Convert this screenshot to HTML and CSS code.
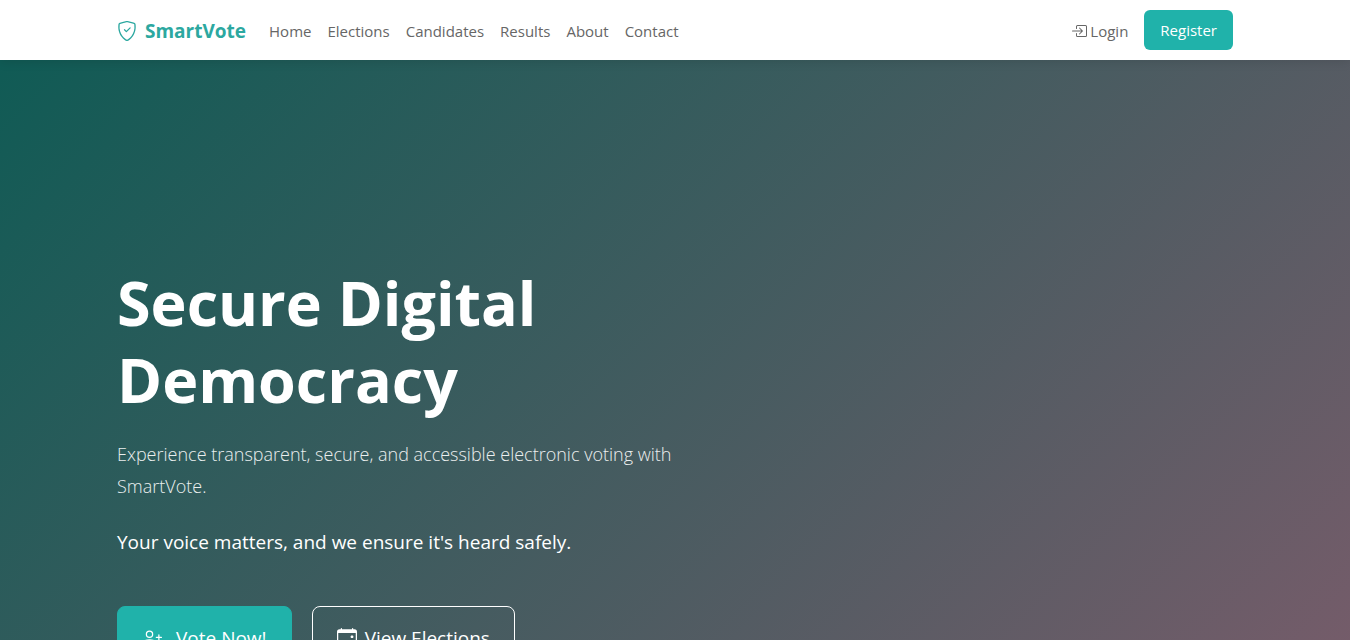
FILE: index.html
```html
<!DOCTYPE html>
<html lang="en">
  <head>
    <meta charset="UTF-8" />
    <meta name="viewport" content="width=device-width, initial-scale=1.0" />
    <title>SmartVote</title>
    <link rel="stylesheet" href="styles.css">
  </head>
  <body>
    <nav class="navbar">
      <div class="container navbar-inner">
        <a class="brand" href="#">
          <svg class="brand-icon" viewBox="0 0 16 16" fill="currentColor" aria-hidden="true">
            <path d="M5.338 1.59a61 61 0 0 0-2.837.856.48.48 0 0 0-.328.39c-.554 4.157.726 7.19 2.253 9.188a10.7 10.7 0 0 0 2.287 2.233c.346.244.652.42.893.533q.18.085.293.118a1 1 0 0 0 .101.025 1 1 0 0 0 .1-.025q.114-.034.294-.118c.24-.113.547-.29.893-.533a10.7 10.7 0 0 0 2.287-2.233c1.527-1.997 2.807-5.031 2.253-9.188a.48.48 0 0 0-.328-.39c-.651-.213-1.75-.56-2.837-.855C9.552 1.29 8.531 1.067 8 1.067c-.53 0-1.552.223-2.662.524zM5.072.56C6.157.265 7.31 0 8 0s1.843.265 2.928.56c1.11.3 2.229.655 2.887.87a1.54 1.54 0 0 1 1.044 1.262c.596 4.477-.787 7.795-2.465 9.99a11.8 11.8 0 0 1-2.517 2.453 7 7 0 0 1-1.048.625c-.28.132-.581.24-.829.24s-.548-.108-.829-.24a7 7 0 0 1-1.048-.625 11.8 11.8 0 0 1-2.517-2.453C1.928 10.487.545 7.169 1.141 2.692A1.54 1.54 0 0 1 2.185 1.43 63 63 0 0 1 5.072.56" />
            <path d="M10.854 5.146a.5.5 0 0 1 0 .708l-3 3a.5.5 0 0 1-.708 0l-1.5-1.5a.5.5 0 1 1 .708-.708L7.5 7.793l2.646-2.647a.5.5 0 0 1 .708 0" />
          </svg>
          SmartVote
        </a>
        <ul class="nav-links">
          <li><a href="#">Home</a></li>
          <li><a href="#">Elections</a></li>
          <li><a href="#">Candidates</a></li>
          <li><a href="#">Results</a></li>
          <li><a href="#">About</a></li>
          <li><a href="#">Contact</a></li>
        </ul>
        <div class="nav-actions">
          <a class="login-link" href="#">
            <svg class="login-icon" viewBox="0 0 16 16" fill="currentColor" aria-hidden="true">
              <path d="M6 3.5a.5.5 0 0 1 .5-.5h8a.5.5 0 0 1 .5.5v9a.5.5 0 0 1-.5.5h-8a.5.5 0 0 1-.5-.5v-2a.5.5 0 0 0-1 0v2A1.5 1.5 0 0 0 6.5 14h8a1.5 1.5 0 0 0 1.5-1.5v-9A1.5 1.5 0 0 0 14.5 2h-8A1.5 1.5 0 0 0 5 3.5v2a.5.5 0 0 0 1 0z" />
              <path d="M11.854 8.354a.5.5 0 0 0 0-.708l-3-3a.5.5 0 1 0-.708.708L10.293 7.5H1.5a.5.5 0 0 0 0 1h8.793l-2.147 2.146a.5.5 0 0 0 .708.708z" />
            </svg>
            Login
          </a>
          <button class="register-btn" type="button">Register</button>
        </div>
      </div>
    </nav>

    <section class="hero">
      <div class="container">
        <div class="hero-content">
          <h1>Secure Digital Democracy</h1>
          <p class="lead">Experience transparent, secure, and accessible electronic voting with SmartVote.</p>
          <p class="tagline">Your voice matters, and we ensure it's heard safely.</p>
          <div class="hero-buttons">
            <button class="hero-btn vote-btn" type="button">
              <svg class="btn-icon" viewBox="0 0 16 16" fill="currentColor" aria-hidden="true">
                <path d="M6 8a3 3 0 1 0 0-6 3 3 0 0 0 0 6m2-3a2 2 0 1 1-4 0 2 2 0 0 1 4 0m4 8c0 1-1 1-1 1H1s-1 0-1-1 1-4 6-4 6 3 6 4m-1-.004c-.001-.246-.154-.986-.832-1.664C9.516 10.68 8.289 10 6 10s-3.516.68-4.168 1.332c-.678.678-.83 1.418-.832 1.664z" />
                <path d="M13.5 5a.5.5 0 0 1 .5.5V7h1.5a.5.5 0 0 1 0 1H14v1.5a.5.5 0 0 1-1 0V8h-1.5a.5.5 0 0 1 0-1H13V5.5a.5.5 0 0 1 .5-.5" />
              </svg>
              Vote Now!
            </button>
            <button class="hero-btn view-btn" type="button">
              <svg class="btn-icon" viewBox="0 0 16 16" fill="currentColor" aria-hidden="true">
                <path d="M11 6.5a.5.5 0 0 1 .5-.5h1a.5.5 0 0 1 .5.5v1a.5.5 0 0 1-.5.5h-1a.5.5 0 0 1-.5-.5z" />
                <path d="M3.5 0a.5.5 0 0 1 .5.5V1h8V.5a.5.5 0 0 1 1 0V1h1a2 2 0 0 1 2 2v11a2 2 0 0 1-2 2H2a2 2 0 0 1-2-2V3a2 2 0 0 1 2-2h1V.5a.5.5 0 0 1 .5-.5M1 4v10a1 1 0 0 0 1 1h12a1 1 0 0 0 1-1V4z" />
              </svg>
              View Elections
            </button>
          </div>
        </div>
      </div>
    </section>
  </body>
</html>
```
FILE: styles.css
```css
* {
  box-sizing: border-box;
}
body {
  margin: 0;
  font-family: "Segoe UI", "Open Sans", "Noto Sans", sans-serif;
  font-size: 15px;
  line-height: 24px;
  color: #666;
}
a {
  color: inherit;
  text-decoration: none;
}
button {
  font-family: inherit;
  cursor: pointer;
}
.container {
  max-width: 1140px;
  margin: 0 auto;
  padding: 0 12px;
}

/* Navbar */
.navbar {
  position: relative;
  background: #fff;
  box-shadow: 0 2px 10px rgba(0, 0, 0, 0.1);
}
.navbar-inner {
  display: flex;
  align-items: center;
  min-height: 60px;
}
.brand,
.nav-links,
.login-link {
  padding: 2px 0 0;
}
.brand {
  display: flex;
  align-items: center;
  gap: 8px;
  margin-right: 23px;
  font-size: 19px;
  font-weight: 700;
  color: #2ca8a0;
}
.brand-icon {
  width: 20px;
  height: 20px;
}
.nav-links {
  display: flex;
  gap: 16px;
  margin: 0;
  list-style: none;
}
.nav-actions {
  display: flex;
  align-items: center;
  gap: 16px;
  margin-left: auto;
}
.login-link {
  display: flex;
  align-items: center;
  gap: 3px;
}
.login-icon {
  width: 16px;
  height: 16px;
}
.register-btn {
  padding: 8px 16px;
  border: 0;
  border-radius: 6px;
  background: #20b2aa;
  color: #fff;
  font-size: 15px;
  line-height: 24px;
}

/* Hero */
.hero {
  padding: 204px 0;
  background: linear-gradient(135deg, #105b55, #805c6c);
  color: #fff;
}
.hero-content {
  max-width: 600px;
}
.hero h1 {
  margin: 0 0 20px;
  font-size: 61px;
  font-weight: 700;
  line-height: 77px;
}
.hero p {
  margin: 0 0 24px;
  line-height: 32px;
}
.lead {
  font-size: 18px;
  font-weight: 350;
  opacity: 0.9;
}
.tagline {
  font-size: 19px;
}
.hero-buttons {
  display: flex;
  gap: 20px;
  padding-top: 24px;
}
.hero-btn {
  display: flex;
  align-items: center;
  padding: 16px 24px;
  border: 1px solid #20b2aa;
  border-radius: 8px;
  color: #fff;
  font-size: 19px;
  font-weight: 500;
  line-height: 30px;
}
.vote-btn {
  gap: 14px;
  background: #20b2aa;
}
.view-btn {
  gap: 8px;
  background: transparent;
  border-color: #fff;
}
.btn-icon {
  width: 20px;
  height: 20px;
}
```
